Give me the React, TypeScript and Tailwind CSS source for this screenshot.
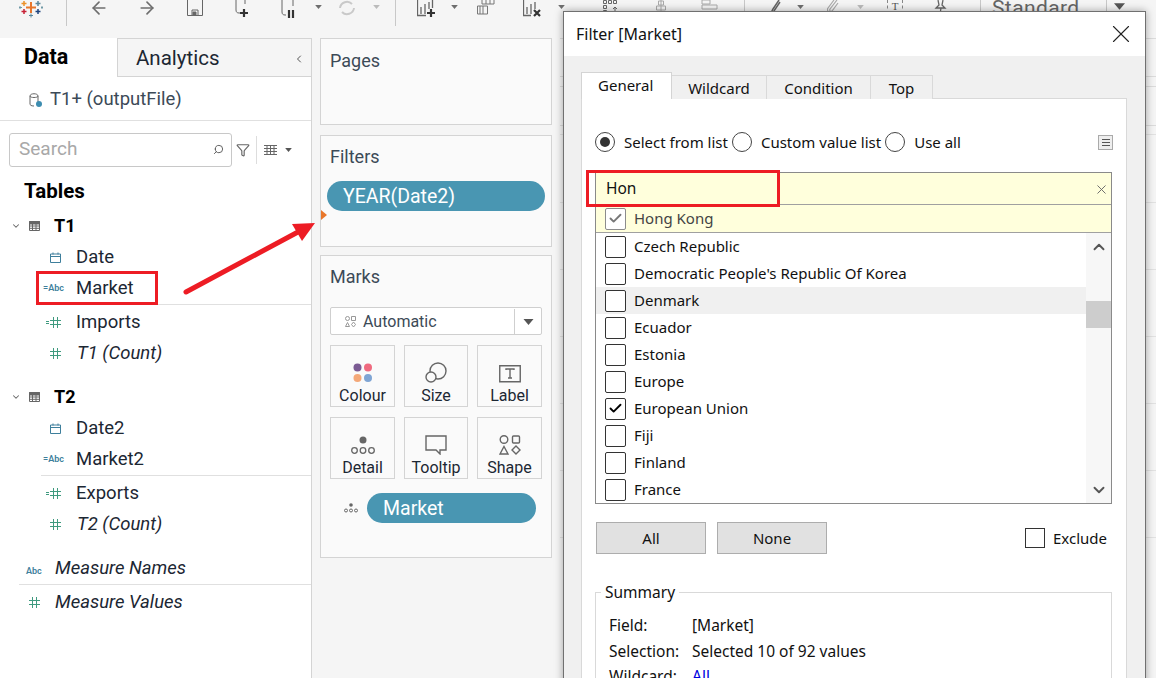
import React from 'react';
import { ChevronDown, ChevronLeft, ChevronUp, ArrowLeft, ArrowRight, Check, X, Search, Filter } from 'lucide-react';

const Caret = ({ className = '' }: { className?: string }) => (
  <svg width="10" height="6" viewBox="0 0 10 6" className={className}><path d="M0 0h10L5 6z" fill="currentColor" /></svg>
);

const TableIcon = () => (
  <svg width="11" height="10" viewBox="0 0 11 10" fill="none" stroke="#666"><path d="M.5.5h10v9H.5zM.5 3h10M.5 5h10M.5 7.3h10M3.5 3v6.5M7 3v6.5" /><path d="M.5.5h10v2H.5z" fill="#666" /></svg>
);
const DateIcon = () => (
  <svg width="11" height="11" viewBox="0 0 11 11" fill="none" stroke="#3e7f9c"><path d="M.5 2h10v8.5H.5zM.5 4.5h10M3 .5v2M8 .5v2" /></svg>
);
const HashIcon = ({ eq }: { eq?: boolean }) => (
  <span className="flex items-center gap-[1px]">
    {eq && <span className="w-[3px] h-[3px] border-y border-[#3f9a7f]" />}
    <svg width="11" height="11" viewBox="0 0 11 11" fill="none" stroke="#3f9a7f"><path d="M3.5 0v11M7.5 0v11M0 3.5h11M0 7.5h11" /></svg>
  </span>
);
const AbcIcon = ({ eq }: { eq?: boolean }) => (
  <span className={`text-[9px] leading-none font-semibold text-[#3e7f9c] font-['Roboto',sans-serif] ${eq ? '-mr-[3px]' : ''}`}>{eq ? '=Abc' : 'Abc'}</span>
);

const TableHead = ({ label }: { label: string }) => (
  <div className="h-[31px] flex items-center">
    <ChevronDown className="ml-[11px] w-[10px] h-[10px] text-[#666]" strokeWidth={2.5} />
    <span className="ml-[8px]"><TableIcon /></span>
    <span className="ml-[14px] font-bold text-[18px] text-black">{label}</span>
  </div>
);

const Field = ({ icon, label, italic }: { icon: React.ReactNode; label: string; italic?: boolean }) => (
  <div className="h-[31px] pt-[2px] flex items-center">
    <span className="w-[76px] pr-[15px] flex justify-end">{icon}</span>
    <span className={`text-[18.5px] text-[#1c2733] ${italic ? 'italic ml-[1px]' : ''}`}>{label}</span>
  </div>
);

const Pill = ({ label, className }: { label: string; className: string }) => (
  <div className={`h-[30px] pt-[2px] rounded-full bg-[#4996b2] text-white text-[19.5px] flex items-center pl-[16px] ${className}`}>{label}</div>
);

const MarkButton = ({ icon, label }: { icon: React.ReactNode; label: string }) => (
  <div className="h-[62px] border border-[#d4d4d4] flex flex-col items-center">
    <div className="h-[38px] flex items-end justify-center pb-[1px]">{icon}</div>
    <span className="mt-[3px] text-[16px] leading-[18px] text-[#1c2733]">{label}</span>
  </div>
);

const Box = ({ checked, muted }: { checked?: boolean; muted?: boolean }) => (
  <span className={`w-[21px] h-[22px] rounded-[2px] border bg-white flex items-center justify-center ${muted ? 'border-[#8c8c8c]' : 'border-[#333]'}`}>
    {checked && <Check className={`w-[15px] h-[15px] ${muted ? 'text-[#777]' : 'text-black'}`} strokeWidth={3} />}
  </span>
);

const Radio = ({ on }: { on?: boolean }) => (
  <span className="w-[20px] h-[20px] rounded-full border border-[#444] flex items-center justify-center bg-white">
    {on && <span className="w-[10px] h-[10px] rounded-full bg-[#333]" />}
  </span>
);

const countries = ['Czech Republic', "Democratic People's Republic Of Korea", 'Denmark', 'Ecuador', 'Estonia', 'Europe', 'European Union', 'Fiji', 'Finland', 'France'];

const Sep = ({ ml }: { ml: string }) => <div className={`w-px h-[26px] bg-[#c8c8c8] self-start ${ml}`} />;

export default function App() {
  return (
    <div className="relative w-[1156px] h-[678px] overflow-hidden bg-[#f5f5f5] font-['Roboto',sans-serif]">
      {/* Toolbar */}
      <div className="h-[38px] flex items-start text-[#6e6e6e]">
        <svg width="24" height="18" viewBox="0 0 24 18" className="ml-[19px] mt-0">
          <path d="M12 2v11M7 7.500h10" stroke="#e8762b" strokeWidth="2" />
          <path d="M5 1v5M2.500 3.500h5" stroke="#eb9129" strokeWidth="1.500" />
          <path d="M19 1v5M16.500 3.500h5" stroke="#5b879b" strokeWidth="1.500" />
          <path d="M5 9v5M2.500 11.500h5" stroke="#c72035" strokeWidth="1.500" />
          <path d="M19 9v5M16.500 11.500h5" stroke="#1f447e" strokeWidth="1.500" />
          <path d="M12 13.500v4M10 15.500h4" stroke="#59879b" strokeWidth="1" />
          <path d="M1 6v3M0 7.500h3M23 6v3M22 7.500h2" stroke="#7099a6" strokeWidth="1" />
        </svg>
        <Sep ml="ml-[23px]" />
        <ArrowLeft className="ml-[22px] mt-[-4px] w-[20px] h-[24px]" strokeWidth={2} />
        <ArrowRight className="ml-[28px] mt-[-4px] w-[20px] h-[24px]" strokeWidth={2} />
        <svg width="16" height="16" viewBox="0 0 16 16" fill="none" stroke="#666" className="ml-[30px]"><path d="M.5 0v15.500h15V0M5 15V10h6v5" /><path d="M6 12h3v3H6z" fill="#666" /></svg>
        <svg width="14" height="18" viewBox="0 0 14 18" fill="none" className="ml-[32px]"><path d="M1 0v10c0 2 1 3 3 3h1M10 0v4" stroke="#666" /><path d="M9 9v8M5 13h8" stroke="#333" strokeWidth="2.200" /></svg>
        <svg width="14" height="18" viewBox="0 0 14 18" fill="none" className="ml-[32px]"><path d="M1 0v12c0 2 1 3 3 3h1M12 0v6" stroke="#666" /><path d="M8 10v8M12 10v8" stroke="#333" strokeWidth="2.200" /></svg>
        <Caret className="ml-[20px] mt-[5px] w-[7px] h-[4px]" />
        <svg width="18" height="16" viewBox="0 0 18 16" fill="none" stroke="#c9c9c9" strokeWidth="2" className="ml-[16px]"><path d="M2 8a7 7 0 0 1 12-4M16 8a7 7 0 0 1-12 4" /></svg>
        <Caret className="ml-[17px] mt-[5px] w-[7px] h-[4px] text-[#bbb]" />
        <Sep ml="ml-[15px]" />
        <svg width="20" height="18" viewBox="0 0 20 18" fill="none" className="ml-[21px]"><path d="M.5 0v15.500H9M4 14V7M8 14V4M12 9V2M15.500 0v8" stroke="#666" strokeWidth="1.300" /><path d="M14 9v8M10 13h8" stroke="#333" strokeWidth="2.200" /></svg>
        <Caret className="ml-[14px] mt-[5px] w-[7px] h-[4px]" />
        <svg width="18" height="15" viewBox="0 0 18 15" fill="none" stroke="#777" className="ml-[19px]"><path d="M5 0v4h12V0M9 4V0M13 4V0M.5 6h10v8H.5zM3 6v8M6 6v8" /></svg>
        <svg width="20" height="18" viewBox="0 0 20 18" fill="none" className="ml-[28px]"><path d="M.5 0v15.500H8M4 14V7M8 14V4M12 9V2" stroke="#666" strokeWidth="1.300" /><path d="M11 10l6 6M17 10l-6 6" stroke="#333" strokeWidth="2.200" /></svg>
        <Caret className="ml-[15px] mt-[5px] w-[7px] h-[4px]" />
        <svg width="18" height="14" viewBox="0 0 18 14" fill="none" stroke="#666" className="ml-[37px]"><path d="M1.500.5h3v3h-3zM6.500.5h3v3h-3zM11.500.5h3v3h-3zM1.500 5.500h3v3h-3zM1.500 10.500h3v3h-3zM13 7v6M11 9l2-2 2 2" /></svg>
        <svg width="16" height="14" viewBox="0 0 16 14" fill="none" stroke="#aaa" className="ml-[33px]"><path d="M8 0v11M5.500 1h5v4h-5zM3.500 6h9v4h-9zM1 11.500h14" /></svg>
        <svg width="18" height="14" viewBox="0 0 18 14" fill="none" stroke="#aaa" className="ml-[32px]"><path d="M1 0h8v4H1zM1 5h15v4H1zM1 11.500h12" /></svg>
        <Sep ml="ml-[25px]" />
        <svg width="12" height="14" viewBox="0 0 12 14" fill="none" stroke="#666" strokeWidth="1.500" className="ml-[25px]"><path d="M9 0L3 9 1 13l3-2 6-9" /></svg>
        <Caret className="ml-[15px] mt-[5px] w-[7px] h-[4px]" />
        <svg width="12" height="14" viewBox="0 0 12 14" fill="none" stroke="#aaa" strokeWidth="1.200" className="ml-[23px]"><path d="M10 0L3 9c-1 2 1 3 2 2l6-8M7 0L1 8c-2 3 2 6 4 4" /></svg>
        <Caret className="ml-[18px] mt-[5px] w-[7px] h-[4px] text-[#bbb]" />
        <div className="ml-[23px] w-[16px] h-[14px] border-x border-dashed border-[#888] text-[11px] leading-[13px] text-center font-['Liberation_Serif',serif] text-[#555]">T</div>
        <svg width="16" height="14" viewBox="0 0 16 14" fill="none" stroke="#666" className="ml-[30px]"><path d="M5 0l1 5-3 3h9L9 5l1-5M8 8l-1 6" strokeWidth="1.300" /></svg>
        <Sep ml="ml-[31px]" />
        <span className="ml-[11px] w-[84px] mt-[-4px] text-[21px] leading-[24px] text-[#666] tracking-[0.4px]">Standard</span>
        <Sep ml="ml-[30px]" />
        <Caret className="ml-[7px] mt-[3px] w-[11px] h-[7px] text-[#555]" />
      </div>

      <div className="flex items-start">
        {/* Data pane */}
        <div className="w-[312px] h-[640px] bg-white border-r border-[#d4d4d4] shrink-0">
          <div className="h-[39px] flex text-[20.5px]">
            <div className="w-[117px] pl-[24px] flex items-center font-bold text-[21.5px] text-black">Data</div>
            <div className="flex-1 pt-[2px] bg-[#f5f5f5] border-t border-l border-b border-[#d4d4d4] flex items-center pl-[18px] text-[#1c2733]">
              Analytics
              <ChevronLeft className="ml-auto mr-[6px] w-[12px] h-[12px] text-[#555]" />
            </div>
          </div>
          <div className="h-[44px] pt-[2px] border-b border-[#e0e0e0] flex items-center pl-[29px] text-[#3c4a57] text-[18.5px]">
            <svg width="13" height="14" viewBox="0 0 13 14" fill="none" className="mr-[8px]"><path d="M1 3c0-3 8-3 8 0v6M1 3v8c0 1 1 2 4 2M1 3c0 2 8 2 8 0" stroke="#666" /><circle cx="10" cy="11" r="3" fill="#3d8db0" /></svg>
            T1+ (outputFile)
          </div>
          <div className="h-[34px] mt-[12px] flex items-center">
            <div className="ml-[9px] w-[223px] h-[34px] border border-[#c8c8c8] rounded-[3px] flex items-center pl-[9px] pr-[7px] pb-[1px] text-[19px] text-[#a8a8a8]">
              Search
              <Search className="ml-auto w-[11px] h-[11px] text-[#555] -scale-x-100" />
            </div>
            <Filter className="ml-[4px] w-[14px] h-[14px] text-[#666]" />
            <div className="ml-[6px] w-px h-[28px] bg-[#ddd]" />
            <svg width="13" height="10" viewBox="0 0 13 10" fill="none" stroke="#666" className="ml-[7px]"><path d="M0 .5h13M0 3.500h13M0 6.500h13M0 9.500h13M3 0v10M6.500 0v10M10 0v10" /></svg>
            <Caret className="ml-[8px] w-[7px] h-[4px] text-[#555]" />
          </div>
          <div className="mt-[11px] pl-[24px] h-[26px] leading-[26px] font-bold text-[20.5px] text-black">Tables</div>
          <div className="mt-[6px]">
            <TableHead label="T1" />
            <Field icon={<DateIcon />} label="Date" />
            <Field icon={<AbcIcon eq />} label="Market" />
            <div className="ml-[41px] h-px bg-[#e0e0e0] mt-px mb-[1px]" />
            <Field icon={<HashIcon eq />} label="Imports" />
            <Field icon={<HashIcon />} label="T1 (Count)" italic />
            <div className="h-[13px]" />
            <TableHead label="T2" />
            <Field icon={<DateIcon />} label="Date2" />
            <Field icon={<AbcIcon eq />} label="Market2" />
            <div className="ml-[41px] h-px bg-[#e0e0e0] mt-px mb-[1px]" />
            <Field icon={<HashIcon eq />} label="Exports" />
            <Field icon={<HashIcon />} label="T2 (Count)" italic />
            <div className="h-[13px]" />
            <div className="h-[31px] pt-[2px] flex items-center">
              <span className="w-[55px] pl-[26px]"><AbcIcon /></span>
              <span className="text-[18.5px] italic text-[#1c2733]">Measure Names</span>
            </div>
            <div className="ml-[19px] h-px bg-[#e0e0e0] mt-px mb-[1px]" />
            <div className="h-[31px] pt-[2px] flex items-center">
              <span className="w-[55px] pl-[29px]"><HashIcon /></span>
              <span className="text-[18.5px] italic text-[#1c2733]">Measure Values</span>
            </div>
          </div>
        </div>

        {/* Shelves */}
        <div className="w-[232px] ml-[8px] flex flex-col shrink-0">
          <div className="h-[87px] bg-[#fafafa] border border-[#d4d4d4] pl-[9px] pt-[8px] text-[18px] text-[#3c4a57]">Pages</div>
          <div className="relative mt-[10px] h-[112px] bg-[#fafafa] border border-[#d4d4d4] pl-[9px] pt-[7px] text-[18px] text-[#3c4a57]">
            Filters
            <Pill label="YEAR(Date2)" className="mt-[11px] -ml-[3px] w-[218px]" />
            <span className="absolute left-0 top-[74px] border-y-[5px] border-y-transparent border-l-[6px] border-l-[#e8762b]" />
          </div>
          <div className="mt-[8px] h-[303px] bg-[#fafafa] border border-[#d4d4d4] px-[9px] pt-[10px]">
            <div className="text-[18px] leading-[22px] text-[#3c4a57]">Marks</div>
            <div className="mt-[19px] h-[28px] pt-[1px] bg-white border border-[#cfcfcf] rounded-[2px] flex items-center text-[16px] text-[#3c4a57]">
              <svg width="11" height="11" viewBox="0 0 11 11" fill="none" stroke="#999" className="ml-[14px] mr-[7px]"><circle cx="2.500" cy="2.500" r="2" /><path d="M6.500.5h4v4h-4zM2.500 6.500l2 4h-4zM8.500 6l2 2.500-2 2.500-2-2.500z" /></svg>
              Automatic
              <div className="ml-auto w-[27px] h-full border-l border-[#cfcfcf] flex items-center justify-center">
                <Caret className="w-[11px] h-[6px] text-[#555]" />
              </div>
            </div>
            <div className="mt-[10px] grid grid-cols-[65px_64px_65px] gap-x-[9px] gap-y-[10px]">
              <MarkButton label="Colour" icon={
                <svg width="20" height="20" viewBox="0 0 20 20"><circle cx="4.500" cy="4.500" r="4" fill="#7b5b93" /><circle cx="15" cy="4.500" r="4" fill="#ef6a7f" /><circle cx="4.500" cy="15" r="4" fill="#f4a878" /><circle cx="15" cy="15" r="4" fill="#7fa5d4" /></svg>
              } />
              <MarkButton label="Size" icon={
                <svg width="22" height="21" viewBox="0 0 22 21" fill="none" stroke="#666" strokeWidth="1.400"><circle cx="13" cy="9" r="8" fill="#fafafa" /><circle cx="6" cy="15" r="5" fill="#fafafa" /></svg>
              } />
              <MarkButton label="Label" icon={
                <svg width="22" height="18" viewBox="0 0 22 18" fill="none"><path d="M.75.75h20.500v16H.75z" stroke="#666" strokeWidth="1.400" /><path d="M7 5V4h8v1M11 4v9M9 13h4" stroke="#666" strokeWidth="1.400" /></svg>
              } />
              <MarkButton label="Detail" icon={
                <svg width="24" height="19" viewBox="0 0 24 19" fill="none" stroke="#666" strokeWidth="1.300"><circle cx="12" cy="4" r="3.500" fill="#666" stroke="none" /><circle cx="3.500" cy="14.500" r="2.800" /><circle cx="12" cy="14.500" r="2.800" /><circle cx="20.500" cy="14.500" r="2.800" /></svg>
              } />
              <MarkButton label="Tooltip" icon={
                <svg width="22" height="20" viewBox="0 0 22 20" fill="none" stroke="#666" strokeWidth="1.400"><path d="M1 1h20v14h-6v4l-4-4H1z" /></svg>
              } />
              <MarkButton label="Shape" icon={
                <svg width="22" height="20" viewBox="0 0 22 20" fill="none" stroke="#666" strokeWidth="1.400"><circle cx="5" cy="4.500" r="3.800" /><rect x="13.500" y="1" width="7" height="7" rx="1" /><path d="M5 11.500l4 7.500H1zM17 11l4 4-4 4-4-4z" /></svg>
              } />
            </div>
            <div className="mt-[14px] flex items-center">
              <svg width="14" height="10" viewBox="0 0 14 10" fill="none" stroke="#666" className="ml-[14px] mr-[9px]"><circle cx="7" cy="2" r="1.800" fill="#666" stroke="none" /><circle cx="2" cy="7.500" r="1.500" /><circle cx="7" cy="7.500" r="1.500" /><circle cx="12" cy="7.500" r="1.500" /></svg>
              <Pill label="Market" className="w-[169px]" />
            </div>
          </div>
        </div>

        {/* Sheet area, mostly behind the dialog */}
        <div className="flex-1 ml-[8px] flex flex-col">
          <div className="h-[39px] border-y border-[#dcdcdc]" />
          <div className="mt-[9px] h-[40px] border-y border-[#dcdcdc]" />
          <div className="mt-[8px] h-[68px] border-t border-[#e2e2e2]" />
          {[0, 1, 2, 3, 4, 5].map(i => (
            <div key={i} className="h-[67px] border-t border-[#e2e2e2]" />
          ))}
        </div>
      </div>

      {/* Annotations */}
      <div className="absolute left-[36px] top-[271px] w-[122px] h-[34px] border-[3px] border-[#ed1c24]" />
      <svg width="140" height="85" viewBox="0 0 140 85" className="absolute left-[180px] top-[218px]">
        <path d="M6 74L118 14" stroke="#ed1c24" strokeWidth="5" strokeLinecap="round" />
        <path d="M135 5L112 6l10 17z" fill="#ed1c24" />
      </svg>

      {/* Filter dialog */}
      <div className="absolute left-[563px] top-[11px] w-[583px] h-[680px] bg-[#f0f0f0] border border-[#707070] shadow-[0_0_8px_rgba(0,0,0,0.35)] text-[15px] text-[#111] font-['Noto_Sans',sans-serif]">
        <div className="h-[44px] bg-white flex items-center pl-[12px] pr-[9px] text-[16px]">
          Filter [Market]
          <X className="ml-auto w-[30px] h-[30px] text-[#222]" strokeWidth={0.9} />
        </div>
        <div className="ml-[17px] w-[546px] mt-[16px]">
          <div className="flex items-end h-[27px] relative z-10">
            <div className="w-[91px] h-[27px] bg-white border border-b-0 border-[#d4d4d4] pl-[16px] leading-[25px]">General</div>
            <div className="w-[95px] h-[24px] bg-[#f0f0f0] border-t border-r border-[#d9d9d9] text-center leading-[25px]">Wildcard</div>
            <div className="w-[104px] h-[24px] bg-[#f0f0f0] border-t border-r border-[#d9d9d9] text-center leading-[25px]">Condition</div>
            <div className="w-[62px] h-[24px] bg-[#f0f0f0] border-t border-r border-[#d9d9d9] text-center leading-[25px]">Top</div>
          </div>
          <div className="h-[600px] -mt-px bg-white border border-[#d9d9d9] px-[14px]">
            <div className="mt-[33px] -ml-px h-[20px] flex items-center">
              <Radio on /><span className="ml-[9px]">Select from list</span>
              <span className="ml-[4px]"><Radio /></span><span className="ml-[9px]">Custom value list</span>
              <span className="ml-[4px]"><Radio /></span><span className="ml-[9px]">Use all</span>
              <div className="ml-auto -mr-px w-[15px] h-[15px] border border-[#aaa] bg-[#eee] flex flex-col items-center justify-center gap-[2px]">
                <span className="w-[8px] h-px bg-[#555]" /><span className="w-[8px] h-px bg-[#555]" /><span className="w-[8px] h-px bg-[#555]" />
              </div>
            </div>
            <div className="mt-[20px] w-[517px] -ml-px border border-[#8a8a8a]">
              <div className="h-[32px] pt-[1px] bg-[#ffffdc] border-b border-[#a0a0a0] flex items-center pl-[10px] pr-[2px] text-[15.5px]">
                Hon
                <X className="ml-auto w-[15px] h-[15px] text-[#666]" strokeWidth={1.5} />
              </div>
              <div className="h-[28px] bg-[#ffffdc] border-b border-[#a0a0a0] flex items-center pl-[9px] text-[#444]">
                <Box checked muted /><span className="ml-[8px]">Hong Kong</span>
              </div>
              <div className="flex h-[270px]">
                <div className="w-[490px]">
                  {countries.map(name => (
                    <div key={name} className={`h-[27px] flex items-center pl-[9px] ${name === 'Denmark' ? 'bg-[#f0f0f0]' : ''}`}>
                      <Box checked={name === 'European Union'} /><span className="ml-[8px]">{name}</span>
                    </div>
                  ))}
                </div>
                <div className="flex-1 bg-[#f7f7f7] flex flex-col items-center">
                  <ChevronUp className="mt-[5px] w-[18px] h-[18px] text-[#555]" strokeWidth={2.5} />
                  <div className="mt-[45px] w-full h-[27px] bg-[#cdcdcd]" />
                  <ChevronDown className="mt-auto mb-[4px] w-[18px] h-[18px] text-[#555]" strokeWidth={2.5} />
                </div>
              </div>
            </div>
            <div className="mt-[18px] flex items-center">
              <div className="w-[110px] h-[32px] bg-[#e1e1e1] border border-[#adadad] flex items-center justify-center">All</div>
              <div className="ml-[11px] w-[110px] h-[32px] bg-[#e1e1e1] border border-[#adadad] flex items-center justify-center">None</div>
              <span className="ml-auto w-[20px] h-[20px] border border-[#333] bg-white" />
              <span className="ml-[8px] mr-[5px]">Exclude</span>
            </div>
            <div className="relative mt-[38px] w-[517px] -ml-px h-[120px] border border-[#d9d9d9] pt-[20px] pl-[13px] text-[15.5px]">
              <span className="absolute -top-[11px] left-[5px] px-[4px] bg-white leading-[20px]">Summary</span>
              <div className="grid grid-cols-[83px_1fr] gap-y-[1px] leading-[24.5px]">
                <span>Field:</span><span>[Market]</span>
                <span>Selection:</span><span>Selected 10 of 92 values</span>
                <span>Wildcard:</span><span className="text-[#0000e0]">All</span>
              </div>
            </div>
          </div>
        </div>
      </div>

      {/* Hon highlight */}
      <div className="absolute left-[586px] top-[170px] w-[194px] h-[37px] border-[3px] border-[#ed1c24]" />
    </div>
  );
}
